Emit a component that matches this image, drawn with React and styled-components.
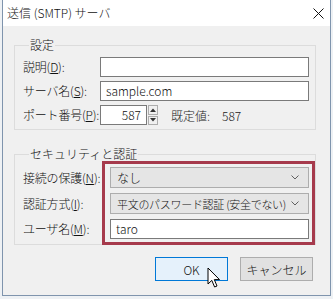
import styled, { createGlobalStyle } from 'styled-components';

const GlobalStyle = createGlobalStyle`
  html, body {
    margin: 0;
    padding: 0;
    background: #eef1f4;
  }
  body {
    font-family: "Noto Sans CJK JP", "Noto Sans", sans-serif;
    font-size: 12px;
    font-weight: 300;
    color: #111;
  }
`;

const Window = styled.div`
  position: relative;
  margin-left: 2px;
  width: 327px;
  height: 295px;
  border: 1px solid #7f94ad;
  border-top: none;
  background: #f0f0f0;
  overflow: hidden;
`;

const TitleBar = styled.div`
  height: 26px;
  background: #fff;
  display: flex;
  align-items: center;
  justify-content: space-between;
  padding: 0 6px 0 4px;
  font-size: 12px;
  line-height: 26px;
`;

const CloseButton = styled.div`
  width: 12px;
  height: 12px;
  display: flex;
  align-items: center;
  justify-content: center;
  margin-top: 1px;
`;

const Content = styled.div`
  padding: 11px 0 0 11px;
`;

const Group = styled.fieldset`
  position: relative;
  box-sizing: border-box;
  width: 302px;
  margin: 0 0 ${({ $gap }) => $gap || 0}px 0;
  padding: ${({ $pt }) => $pt}px 6px ${({ $pb }) => $pb}px 8px;
  border: 1px solid #dcdcdc;
  min-width: 0;
`;

const Legend = styled.legend`
  padding: 0 1px;
  margin-left: 6px;
  line-height: 16px;
  font-size: 12px;
`;

const Rows = styled.div`
  display: grid;
  grid-template-columns: ${({ $label }) => $label}px 1fr;
  row-gap: ${({ $gap }) => $gap}px;
  align-items: center;
`;

const Label = styled.div`
  font-size: 12px;
  line-height: 16px;
  white-space: nowrap;
  letter-spacing: -0.2px;
`;

const Key = styled.span`
  text-decoration: underline;
  text-underline-offset: 1px;
`;

const TextBox = styled.div`
  box-sizing: border-box;
  height: ${({ $h }) => $h || 20}px;
  width: ${({ $w }) => ($w ? `${$w}px` : 'auto')};
  border: 1px solid #7a7a7a;
  background: #fff;
  padding: 0 5px;
  display: flex;
  align-items: center;
  justify-content: ${({ $right }) => ($right ? 'flex-end' : 'flex-start')};
  font-size: 12px;
  line-height: 16px;
`;

const PortLine = styled.div`
  display: flex;
  align-items: center;
`;

const Spinner = styled.div`
  box-sizing: border-box;
  width: 10px;
  height: 20px;
  margin-left: 1px;
  display: flex;
  flex-direction: column;
  gap: 1px;
`;

const SpinPart = styled.div`
  flex: 1;
  background: #f0f0f0;
  border: 1px solid #adadad;
  display: flex;
  align-items: center;
  justify-content: center;
`;

const DefaultText = styled.div`
  margin-left: 13px;
  display: flex;
  gap: 12px;
  font-size: 12px;
  color: #222;
`;

const Select = styled.div`
  box-sizing: border-box;
  height: ${({ $h }) => $h}px;
  border: 1px solid #adadad;
  background: #e5e5e5;
  padding: 0 9px 0 6px;
  display: flex;
  align-items: center;
  justify-content: space-between;
  font-size: 12px;
  line-height: 16px;
  white-space: nowrap;
`;

const SelectText = styled.span`
  font-size: ${({ $small }) => ($small ? '11px' : '12px')};
  letter-spacing: ${({ $small }) => ($small ? '-0.3px' : '0')};
`;

const Highlight = styled.div`
  position: absolute;
  left: 87px;
  top: -1px;
  width: 213px;
  height: 84px;
  box-sizing: border-box;
  border: 3px solid #a63a4c;
  pointer-events: none;
`;

const ButtonRow = styled.div`
  display: flex;
  justify-content: flex-end;
  gap: 12px;
  width: 299px;
  margin-top: 12px;
`;

const Button = styled.div`
  box-sizing: border-box;
  width: 73px;
  height: 24px;
  display: flex;
  align-items: center;
  justify-content: center;
  font-size: 12px;
  background: ${({ $primary }) => ($primary ? '#e5f1fb' : '#e1e1e1')};
  border: 1px solid ${({ $primary }) => ($primary ? '#0078d7' : '#adadad')};
`;

const Cursor = styled.svg`
  position: absolute;
  left: 204px;
  top: 267px;
`;

const Chevron = () => (
  <svg width="8" height="5" viewBox="0 0 8 5">
    <path d="M0.5 0.5 L4 4 L7.5 0.5" fill="none" stroke="#606060" strokeWidth="1" />
  </svg>
);

const App = () => {
  return (
    <>
      <GlobalStyle />
      <Window>
        <TitleBar>
          <span>送信 (SMTP) サーバ</span>
          <CloseButton>
            <svg width="11" height="11" viewBox="0 0 11 11">
              <path d="M0.5 0.5 L10.5 10.5 M10.5 0.5 L0.5 10.5" stroke="#111" strokeWidth="1" />
            </svg>
          </CloseButton>
        </TitleBar>
        <Content>
          <Group $pt={4} $pb={4} $gap={16}>
            <Legend>設定</Legend>
            <Rows $label={77} $gap={4}>
              <Label>説明(<Key>D</Key>):</Label>
              <TextBox />
              <Label>サーバ名(<Key>S</Key>):</Label>
              <TextBox>sample.com</TextBox>
              <Label>ポート番号(<Key>P</Key>):</Label>
              <PortLine>
                <TextBox $w={47} $right>587</TextBox>
                <Spinner>
                  <SpinPart>
                    <svg width="6" height="4" viewBox="0 0 6 4"><path d="M0 4 L3 0.5 L6 4 Z" fill="#333" /></svg>
                  </SpinPart>
                  <SpinPart>
                    <svg width="6" height="4" viewBox="0 0 6 4"><path d="M0 0 L3 3.5 L6 0 Z" fill="#333" /></svg>
                  </SpinPart>
                </Spinner>
                <DefaultText>
                  <span>既定値:</span>
                  <span>587</span>
                </DefaultText>
              </PortLine>
            </Rows>
          </Group>

          <Group $pt={5} $pb={5}>
            <Legend>セキュリティと認証</Legend>
            <Rows $label={87} $gap={5}>
              <Label>接続の保護(<Key>N</Key>):</Label>
              <Select $h={21}>
                <SelectText>なし</SelectText>
                <Chevron />
              </Select>
              <Label>認証方式(<Key>I</Key>):</Label>
              <Select $h={21}>
                <SelectText $small>平文のパスワード認証 (安全でない)</SelectText>
                <Chevron />
              </Select>
              <Label>ユーザ名(<Key>M</Key>):</Label>
              <TextBox>taro</TextBox>
            </Rows>
            <Highlight />
          </Group>

          <ButtonRow>
            <Button $primary>OK</Button>
            <Button>キャンセル</Button>
          </ButtonRow>
        </Content>
        <Cursor width="14" height="22" viewBox="0 0 14 22">
          <path
            d="M1 1 L1 17 L4.8 13.4 L7.6 20 L10 19 L7.3 12.6 L12.5 12.6 Z"
            fill="#fff"
            stroke="#000"
            strokeWidth="1"
            strokeLinejoin="miter"
          />
        </Cursor>
      </Window>
    </>
  );
};

export default App;
